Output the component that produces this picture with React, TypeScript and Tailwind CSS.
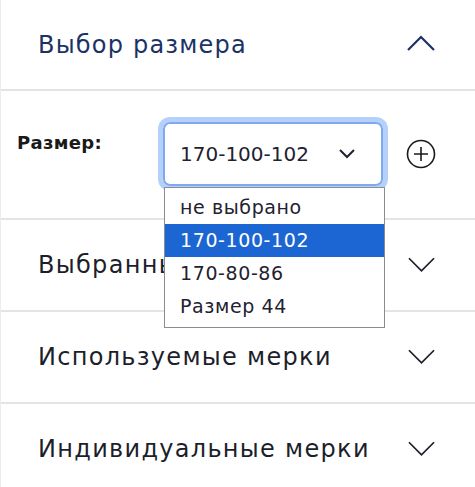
const font = { fontFamily: '"DejaVu Sans", sans-serif' }

function ChevronUp({ className }: { className?: string }) {
  return (
    <svg viewBox="0 0 28 16" className={className} fill="none" stroke="currentColor" strokeWidth={2.2}>
      <path d="M1 15 L14 2 L27 15" />
    </svg>
  )
}

function ChevronDown({ className }: { className?: string }) {
  return (
    <svg viewBox="0 0 28 16" className={className} fill="none" stroke="currentColor" strokeWidth={1.8}>
      <path d="M1 1 L14 14 L27 1" />
    </svg>
  )
}

function Row({ title }: { title: string }) {
  return (
    <div className="h-[92px] flex items-center justify-between pl-[37px] pr-[40px] border-b-2 border-[#e4e4e4]">
      <span className="text-[24px] text-[#1c1f2b] tracking-[1.3px]">{title}</span>
      <ChevronDown className="w-[27px] h-[16px] text-[#1c1f2b]" />
    </div>
  )
}

export default function App() {
  const options = ["не выбрано", "170-100-102", "170-80-86", "Размер 44"]
  return (
    <div className="w-[475px] h-[487px] overflow-hidden bg-white border-l border-[#ececec]" style={font}>
      <div className="h-[91px] flex items-center justify-between pl-[37px] pr-[40px] border-b-2 border-[#e4e4e4]">
        <span className="text-[24px] text-[#1b3266] tracking-[1.2px]">Выбор размера</span>
        <ChevronUp className="w-[28px] h-[16px] text-[#1b3266] -mt-[3px]" />
      </div>

      <div className="relative h-[129px] border-b-2 border-[#e4e4e4] flex items-start pt-[31px]">
        <span className="ml-[16px] mt-[7px] w-[146px] text-[18px] font-semibold text-[#1a1a1a] tracking-[0.3px]">Размер:</span>
        <div className="w-[220px] h-[64px] rounded-[7px] border-2 border-[#7ea9ef] ring-[5px] ring-[#b5d0fa] flex items-center justify-between pl-[15px] pr-[26px]">
          <span className="text-[20px] text-[#1f2230]">170-100-102</span>
          <svg viewBox="0 0 16 10" className="w-[16px] h-[10px] text-[#1f2230]" fill="none" stroke="currentColor" strokeWidth={2}>
            <path d="M1 1 L8 8 L15 1" />
          </svg>
        </div>
        <svg viewBox="0 0 30 30" className="ml-[23px] mt-[17px] w-[30px] h-[30px] text-[#1a1a1a]" fill="none" stroke="currentColor" strokeWidth={1.6}>
          <circle cx="15" cy="15" r="13.5" />
          <path d="M15 8 V22 M8 15 H22" />
        </svg>

        <div className="absolute left-[163px] top-[96px] w-[221px] z-10 bg-white border border-[#8c8c8c] pt-[3px] pb-[4px]">
          {options.map((o, i) => (
            <div
              key={o}
              className={
                "h-[33px] flex items-center pl-[15px] text-[19px] tracking-[0.6px] " +
                (i === 1 ? "bg-[#1c66d3] text-white" : "text-[#1f2230]")
              }
            >
              {o}
            </div>
          ))}
        </div>
      </div>

      <Row title="Выбранные мерки" />
      <Row title="Используемые мерки" />
      <Row title="Индивидуальные мерки" />
    </div>
  )
}
